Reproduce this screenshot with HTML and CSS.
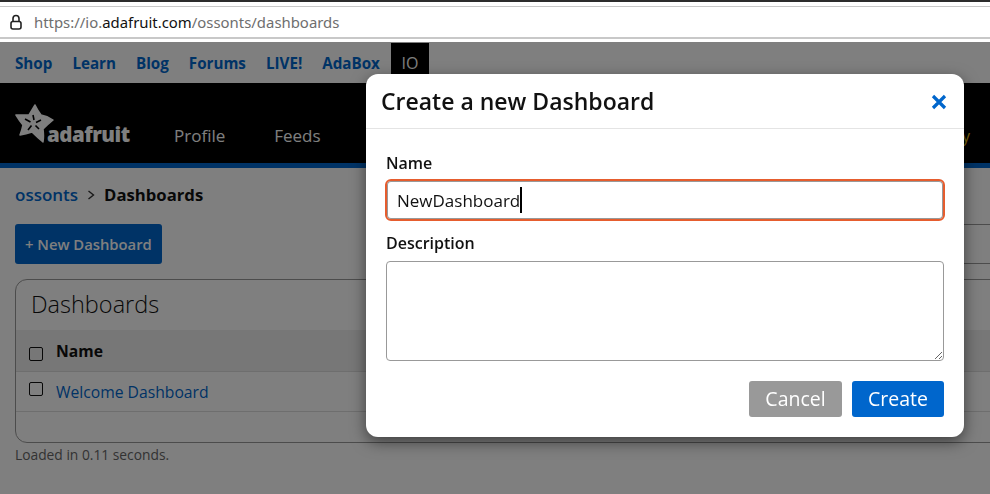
FILE: index.html
```html
<!DOCTYPE html>
<html lang="en-us">

<head>
<title>Dashboards</title>
<meta charset="utf-8" />
<link rel="stylesheet" href="styles.css">
</head>

<body>
<div class="chrome">
  <div class="urlbar">
    <svg class="lock" width="14" height="16" viewBox="0 0 14 16"><rect x="2" y="7.500" width="10" height="7.500" rx="2" fill="none" stroke="#222" stroke-width="1.600"/><path d="M4 7.500V4.500a3 3 0 0 1 6 0V7.500" fill="none" stroke="#222" stroke-width="1.600"/></svg>
    <span class="url">https://io.<b>adafruit.com</b>/ossonts/dashboards</span>
  </div>
</div>

<div class="page">
  <nav class="topnav">
    <a href="#">Shop</a>
    <a href="#">Learn</a>
    <a href="#">Blog</a>
    <a href="#">Forums</a>
    <a href="#">LIVE!</a>
    <a href="#">AdaBox</a>
    <a href="#" class="current">IO</a>
  </nav>

  <header class="mainnav">
    <div class="logo">
      <svg width="40" height="40" viewBox="0 0 40 40">
        <path d="M20 1Q23 7 26 11Q32 12 38 16Q32 21 28 25Q29 32 28 38Q22 33 17 28Q11 30 5 31Q7 26 8 21Q4 16 1 11Q8 11 14 11Q17 6 20 1Z" fill="#fff" stroke="#fff" stroke-width="1.500" stroke-linejoin="round"/>
        <path d="M18 11l1 5M26 16l-5 2.500M10 15l5.500 3M13 26l3.500-4.500M24 25l-3.500-3.500" stroke="#000" stroke-width="1.600"/>
      </svg>
      <span class="logotext">adafruit</span>
    </div>
    <a href="#">Profile</a>
    <a href="#">Feeds</a>
    <a href="#" class="try">Try</a>
  </header>

  <main class="content">
    <div class="crumbs"><a href="#">ossonts</a><svg class="chev" width="8" height="10" viewBox="0 0 8 10"><path d="M1.500 1l5 4-5 4" fill="none" stroke="#333" stroke-width="1.400"/></svg><b>Dashboards</b></div>
    <div class="toolbar">
      <a href="#" class="newbtn">+ New Dashboard</a>
      <div class="search"></div>
    </div>
    <section class="panel">
      <h2>Dashboards</h2>
      <div class="row head"><span class="check low"></span><b>Name</b></div>
      <div class="row item"><span class="check high"></span><a href="#">Welcome Dashboard</a></div>
    </section>
    <p class="loaded">Loaded in 0.11 seconds.</p>
  </main>

  <div class="overlay"></div>

  <form class="modal">
    <div class="modalhead">
      <h3>Create a new Dashboard</h3>
      <svg width="16" height="16" viewBox="0 0 16 16"><path d="M2 2l12 12M14 2L2 14" stroke="#0066cc" stroke-width="3.200"/></svg>
    </div>
    <div class="modalbody">
      <label for="dashname">Name</label>
      <div class="fakeinput" id="dashname"><span>NewDashboard</span><i class="caret"></i></div>
      <label for="dashdesc">Description</label>
      <textarea id="dashdesc"></textarea>
      <div class="actions">
        <button type="button" class="cancel">Cancel</button>
        <button type="button" class="create">Create</button>
      </div>
    </div>
  </form>
</div>
</body>

</html>
```
FILE: styles.css
```css
html, body {
  margin: 0;
  height: 494px;
  overflow: hidden;
}

body {
  background-color: #fff;
  font-family: "Open Sans", sans-serif;
  color: #111;
}

a {
  text-decoration: none;
}

.chrome {
  border-top: 2px solid #2c2c2c;
  padding-top: 4px;
  height: 36px;
}

.urlbar {
  height: 30px;
  border-top: 1px solid #c8c8c8;
  border-bottom: 2px solid #c8c8c8;
  display: flex;
  align-items: center;
  padding-left: 9px;
  gap: 11px;
}

.url {
  font-family: "Noto Sans", sans-serif;
  font-size: 14.900px;
  color: #6e6e6e;
}

.url b {
  font-weight: normal;
  color: #111;
}

.page {
  position: relative;
  height: 452px;
  overflow: hidden;
}

.topnav {
  height: 40px;
  padding: 1px 0 0 15px;
  display: flex;
  align-items: center;
  gap: 20px;
}

.topnav a {
  font-size: 15.200px;
  font-weight: bold;
  color: #0066cc;
  line-height: 40px;
}

.topnav a.current {
  background-color: #000;
  color: #fff;
  width: 38px;
  text-align: center;
  margin-left: -9px;
  font-size: 16px;
  font-weight: normal;
}

.mainnav {
  height: 80px;
  background-color: #000;
  border-bottom: 5px solid #0066cc;
  display: flex;
  align-items: center;
  padding-left: 15px;
}

.mainnav a {
  color: #fff;
  font-size: 17px;
  margin-right: 49px;
  margin-top: 25px;
}

.mainnav a.try {
  color: #ffd21f;
  font-size: 16px;
  margin-left: auto;
  margin-right: 20px;
}

.logo {
  display: flex;
  align-items: flex-end;
  width: 159px;
  margin-top: 2px;
}

.logotext {
  font-weight: 800;
  font-size: 20.500px;
  color: #fff;
  margin-left: -8px;
  margin-bottom: -2px;
  line-height: 24px;
  letter-spacing: -0.500px;
}

.content {
  padding: 16px 0 0 15px;
}

.crumbs {
  font-size: 17px;
  line-height: 22px;
  display: flex;
  align-items: center;
}

.crumbs a {
  color: #0066cc;
  font-weight: 600;
}

.chev {
  margin: 0 9px 0 9px;
}

.crumbs b {
  font-size: 16.700px;
  font-weight: 700;
}

.toolbar {
  margin-top: 18px;
  display: flex;
  justify-content: space-between;
}

.newbtn {
  background-color: #0066cc;
  color: #fff;
  border-radius: 3px;
  font-size: 14.800px;
  font-weight: 600;
  line-height: 40px;
  padding: 0 10px;
}

.search {
  width: 300px;
  height: 40px;
  margin-right: -30px;
  box-sizing: border-box;
  border: 1px solid #999;
}

.panel {
  margin: 15px -30px 0 0;
  border: 1px solid #999;
  border-radius: 12px;
  height: 164px;
  box-sizing: border-box;
}

.panel h2 {
  margin: 0;
  font-size: 23.500px;
  font-weight: 300;
  padding-left: 15px;
  height: 50px;
  line-height: 48px;
}

.row {
  display: flex;
  align-items: center;
  padding-left: 13px;
  gap: 13px;
  font-size: 15.700px;
}

.row.head {
  height: 41px;
  background-color: #eee;
  border-bottom: 1px solid #ddd;
}

.row.item {
  height: 39px;
  border-bottom: 1px solid #ddd;
}

.row.item a {
  color: #0066cc;
}

.check {
  width: 12px;
  height: 12px;
  border: 1.500px solid #111;
  border-radius: 2px;
}

.check.low {
  margin-top: 6px;
}

.check.high {
  margin-bottom: 6px;
}

.loaded {
  margin: 2px 0 0;
  font-size: 13.800px;
  color: #666;
}

.overlay {
  position: absolute;
  inset: 0;
  background-color: rgba(0, 0, 0, 0.5);
}

.modal {
  position: fixed;
  left: 366px;
  top: 74px;
  width: 598px;
  height: 363px;
  background-color: #fff;
  border-radius: 12px;
  box-shadow: 0 5px 15px rgba(0, 0, 0, 0.5);
}

.modalhead {
  height: 54px;
  border-bottom: 1px solid #e4e4e4;
  display: flex;
  align-items: center;
  justify-content: space-between;
  padding: 0 17px 0 15px;
}

.modalhead h3 {
  margin: 0;
  font-size: 23px;
  font-weight: 600;
  color: #111;
}

.modalhead svg {
  margin-top: 1px;
}

.modalbody {
  padding: 24px 20px 0;
}

.modalbody label {
  display: block;
  font-size: 16px;
  font-weight: 600;
  line-height: 20px;
}

.fakeinput {
  margin: 6px -1px 12px;
  height: 42px;
  box-sizing: border-box;
  border: 2.500px solid #e65d2e;
  border-radius: 6px;
  display: flex;
  align-items: center;
  padding-left: 10px;
  font-size: 17px;
  box-shadow: inset 0 0 0 1px #999;
}

.caret {
  width: 2px;
  height: 26px;
  background-color: #000;
}

textarea {
  display: block;
  width: 100%;
  height: 100px;
  margin-top: 8px;
  box-sizing: border-box;
  border: 1px solid #999;
  border-radius: 4px;
}

.actions {
  display: flex;
  justify-content: flex-end;
  gap: 10px;
  margin-top: 20px;
}

.actions button {
  height: 36px;
  width: 92px;
  border: 0;
  border-radius: 3px;
  color: #fff;
  font-family: inherit;
  font-size: 19.500px;
  font-weight: 500;
  padding: 0 0 2px;
}

.actions button.cancel {
  width: 93px;
  background-color: #999;
}

.create {
  background-color: #0066cc;
}
```
